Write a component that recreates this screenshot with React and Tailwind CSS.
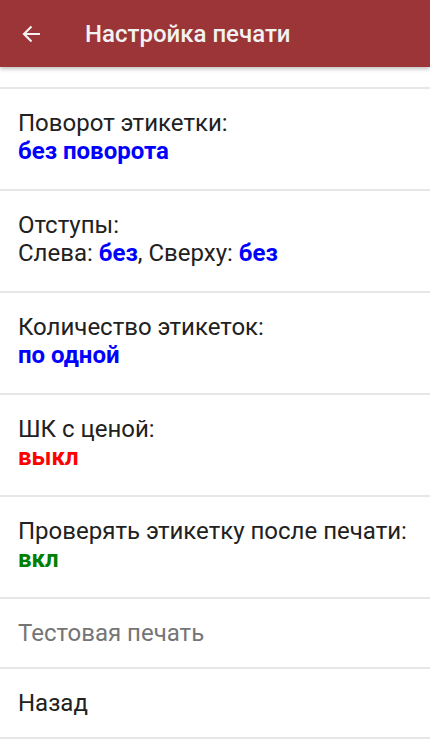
const font = { fontFamily: "Roboto, 'Noto Sans', sans-serif" };

function Divider() {
  return <div className="h-[2px] bg-[#e6e6e6]" />;
}

function Row({ title, children, muted }) {
  return (
    <>
      <div className={`px-[18px] ${children ? "pt-[20px] pb-[24px]" : "py-[20px]"}`}>
        <div className={`text-[24px] leading-[28px] ${muted ? "text-[#757575]" : "text-[#212121]"}`}>
          {title}
        </div>
        {children && <div className="text-[24px] leading-[28px] text-[#212121]">{children}</div>}
      </div>
      <Divider />
    </>
  );
}

export default function App() {
  return (
    <div className="w-[430px] h-[739px] bg-white overflow-hidden" style={font}>
      <div className="relative z-10 h-[67px] bg-[#9b3537] flex items-center shadow-[0_2px_4px_rgba(0,0,0,0.25)]">
        <div className="w-[85px] flex justify-start pl-[20px]">
          <svg width="24" height="24" viewBox="0 0 24 24" fill="none">
            <path d="M20 12H4.5M11.5 4.5L4 12l7.5 7.5" stroke="#f2f2f2" strokeWidth="2.2" />
          </svg>
        </div>
        <h1 className="text-[24px] font-medium text-[#f2f2f2]">Настройка печати</h1>
      </div>
      <div className="h-[20px]" />
      <Divider />
      <Row title="Поворот этикетки:">
        <span className="font-bold text-[#0000ff]">без поворота</span>
      </Row>
      <Row title="Отступы:">
        Слева: <span className="font-bold text-[#0000ff]">без</span>, Сверху:{" "}
        <span className="font-bold text-[#0000ff]">без</span>
      </Row>
      <Row title="Количество этикеток:">
        <span className="font-bold text-[#0000ff]">по одной</span>
      </Row>
      <Row title="ШК с ценой:">
        <span className="font-bold text-[#ff0000]">выкл</span>
      </Row>
      <Row title="Проверять этикетку после печати:">
        <span className="font-bold text-[#008000]">вкл</span>
      </Row>
      <Row title="Тестовая печать" muted />
      <Row title="Назад" />
    </div>
  );
}
